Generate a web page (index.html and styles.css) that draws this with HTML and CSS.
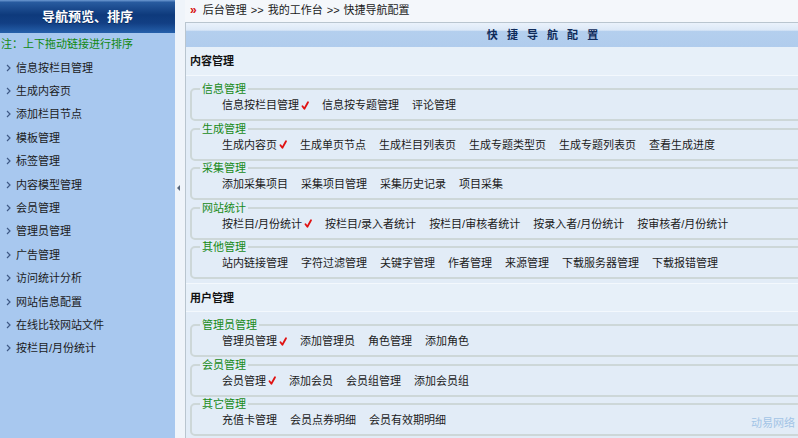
FILE: index.html
```html
<!DOCTYPE html>
<html lang="zh-CN">
<head>
<meta charset="utf-8">
<title>快捷导航配置</title>
<link rel="stylesheet" href="styles.css">
</head>
<body>
<div class="frame">
  <aside class="side">
    <div class="side-head">导航预览、排序</div>
    <div class="side-note">注：上下拖动链接进行排序</div>
    <ul class="side-menu">
      <li><svg class="chev" viewBox="0 0 5 8"><polyline points="1,1 4,4 1,7"/></svg>信息按栏目管理</li>
      <li><svg class="chev" viewBox="0 0 5 8"><polyline points="1,1 4,4 1,7"/></svg>生成内容页</li>
      <li><svg class="chev" viewBox="0 0 5 8"><polyline points="1,1 4,4 1,7"/></svg>添加栏目节点</li>
      <li><svg class="chev" viewBox="0 0 5 8"><polyline points="1,1 4,4 1,7"/></svg>模板管理</li>
      <li><svg class="chev" viewBox="0 0 5 8"><polyline points="1,1 4,4 1,7"/></svg>标签管理</li>
      <li><svg class="chev" viewBox="0 0 5 8"><polyline points="1,1 4,4 1,7"/></svg>内容模型管理</li>
      <li><svg class="chev" viewBox="0 0 5 8"><polyline points="1,1 4,4 1,7"/></svg>会员管理</li>
      <li><svg class="chev" viewBox="0 0 5 8"><polyline points="1,1 4,4 1,7"/></svg>管理员管理</li>
      <li><svg class="chev" viewBox="0 0 5 8"><polyline points="1,1 4,4 1,7"/></svg>广告管理</li>
      <li><svg class="chev" viewBox="0 0 5 8"><polyline points="1,1 4,4 1,7"/></svg>访问统计分析</li>
      <li><svg class="chev" viewBox="0 0 5 8"><polyline points="1,1 4,4 1,7"/></svg>网站信息配置</li>
      <li><svg class="chev" viewBox="0 0 5 8"><polyline points="1,1 4,4 1,7"/></svg>在线比较网站文件</li>
      <li><svg class="chev" viewBox="0 0 5 8"><polyline points="1,1 4,4 1,7"/></svg>按栏目/月份统计</li>
    </ul>
  </aside>

  <div class="splitter"><span class="split-arrow"></span></div>

  <main class="main">
    <div class="crumb"><span class="crumb-mark">»</span>后台管理 &gt;&gt; 我的工作台 &gt;&gt; 快捷导航配置</div>

    <div class="panel">
      <div class="panel-title">快 捷 导 航 配 置</div>

      <div class="sect-head">内容管理</div>
      <div class="sect-body">
        <fieldset class="grp">
          <legend>信息管理</legend>
          <div class="links">
            <span class="lk">信息按栏目管理<svg class="tick" viewBox="0 0 8 9"><path d="M1.5 5.2 L3.4 7.8 L7 1.2"/></svg></span>
            <span class="lk">信息按专题管理</span>
            <span class="lk">评论管理</span>
          </div>
        </fieldset>
        <fieldset class="grp">
          <legend>生成管理</legend>
          <div class="links">
            <span class="lk">生成内容页<svg class="tick" viewBox="0 0 8 9"><path d="M1.5 5.2 L3.4 7.8 L7 1.2"/></svg></span>
            <span class="lk">生成单页节点</span>
            <span class="lk">生成栏目列表页</span>
            <span class="lk">生成专题类型页</span>
            <span class="lk">生成专题列表页</span>
            <span class="lk">查看生成进度</span>
          </div>
        </fieldset>
        <fieldset class="grp">
          <legend>采集管理</legend>
          <div class="links">
            <span class="lk">添加采集项目</span>
            <span class="lk">采集项目管理</span>
            <span class="lk">采集历史记录</span>
            <span class="lk">项目采集</span>
          </div>
        </fieldset>
        <fieldset class="grp">
          <legend>网站统计</legend>
          <div class="links">
            <span class="lk">按栏目/月份统计<svg class="tick" viewBox="0 0 8 9"><path d="M1.5 5.2 L3.4 7.8 L7 1.2"/></svg></span>
            <span class="lk">按栏目/录入者统计</span>
            <span class="lk">按栏目/审核者统计</span>
            <span class="lk">按录入者/月份统计</span>
            <span class="lk">按审核者/月份统计</span>
          </div>
        </fieldset>
        <fieldset class="grp">
          <legend>其他管理</legend>
          <div class="links">
            <span class="lk">站内链接管理</span>
            <span class="lk">字符过滤管理</span>
            <span class="lk">关键字管理</span>
            <span class="lk">作者管理</span>
            <span class="lk">来源管理</span>
            <span class="lk">下载服务器管理</span>
            <span class="lk">下载报错管理</span>
          </div>
        </fieldset>
      </div>

      <div class="sect-head">用户管理</div>
      <div class="sect-body">
        <fieldset class="grp">
          <legend>管理员管理</legend>
          <div class="links">
            <span class="lk">管理员管理<svg class="tick" viewBox="0 0 8 9"><path d="M1.5 5.2 L3.4 7.8 L7 1.2"/></svg></span>
            <span class="lk">添加管理员</span>
            <span class="lk">角色管理</span>
            <span class="lk">添加角色</span>
          </div>
        </fieldset>
        <fieldset class="grp">
          <legend>会员管理</legend>
          <div class="links">
            <span class="lk">会员管理<svg class="tick" viewBox="0 0 8 9"><path d="M1.5 5.2 L3.4 7.8 L7 1.2"/></svg></span>
            <span class="lk">添加会员</span>
            <span class="lk">会员组管理</span>
            <span class="lk">添加会员组</span>
          </div>
        </fieldset>
        <fieldset class="grp">
          <legend>其它管理</legend>
          <div class="links">
            <span class="lk">充值卡管理</span>
            <span class="lk">会员点券明细</span>
            <span class="lk">会员有效期明细</span>
          </div>
        </fieldset>
      </div>
    </div>

    <div class="watermark">动易网络</div>
  </main>
</div>
</body>
</html>
```

FILE: styles.css
```css
html, body {
  margin: 0;
  padding: 0;
}

body {
  width: 798px;
  height: 438px;
  overflow: hidden;
  font-family: "Liberation Sans", "Noto Sans CJK SC", sans-serif;
  font-size: 11px;
  color: #1b1b1b;
  background: #f4f7fb;
}

.frame {
  display: flex;
  height: 438px;
}

/* ---- left navigation column ---- */
.side {
  width: 175px;
  flex: none;
  background: #a8c8ef;
}

.side-head {
  height: 33px;
  line-height: 33px;
  text-align: center;
  color: #fff;
  font-size: 13px;
  font-weight: bold;
  background: linear-gradient(to bottom, #6f9bd3 0, #285b9f 7%, #0e3a7c 45%, #123f84 70%, #2560ab 100%);
  text-shadow: 0 1px 0 #0a2a5a;
}

.side-note {
  height: 22px;
  line-height: 22px;
  padding-left: 1px;
  color: #12880f;
}

.side-menu {
  list-style: none;
  margin: 0;
  padding: 0;
}

.side-menu li {
  height: 23.4px;
  display: flex;
  align-items: center;
  gap: 5px;
  padding-left: 6px;
}

.chev {
  width: 5px;
  height: 8px;
  margin-top: 2px;
  fill: none;
  stroke: #3f5a86;
  stroke-width: 1.2;
}

/* ---- splitter between columns ---- */
.splitter {
  width: 10px;
  flex: none;
  background: #eff4fa;
  display: flex;
  flex-direction: column;
  padding-top: 185px;
  box-sizing: border-box;
}

.split-arrow {
  width: 0;
  height: 0;
  margin-left: 2px;
  border-top: 3px solid transparent;
  border-bottom: 3px solid transparent;
  border-right: 3px solid #56657a;
}

/* ---- right work area ---- */
.main {
  flex: 1;
  min-width: 0;
  overflow: hidden;
  position: relative;
}

.crumb {
  height: 22px;
  line-height: 20px;
  padding-left: 5px;
  color: #1b1b1b;
  white-space: nowrap;
  word-spacing: 1px;
}

.crumb-mark {
  color: #d81010;
  font-weight: bold;
  font-size: 12px;
  margin-right: 6px;
}

.panel {
  width: 712px;
  border: 1px solid #b9c5cf;
  background: #e2ecf7;
  box-sizing: border-box;
}

.panel-title {
  height: 24px;
  line-height: 24px;
  text-align: center;
  font-weight: bold;
  color: #0f2b5a;
  letter-spacing: 3px;
  padding-left: 6px;
  background: linear-gradient(to bottom, #eaf2fb 0, #dce8f7 30%, #b4cfee 34%, #b0cced 100%);
}

.sect-head {
  height: 29px;
  line-height: 29px;
  padding-left: 4px;
  font-weight: bold;
  color: #111;
  background: #e7f0f9;
  border-bottom: 1px solid #f3f8fd;
  box-sizing: border-box;
}

.sect-body {
  padding: 6px 4px 3.5px 4px;
}

.sect-body + .sect-head {
  border-top: 1px solid #f3f8fd;
}

.grp {
  margin: 0 0 0.5px 0;
  padding: 0 8px 5px 8px;
  border: 2px solid #cdd7d8;
  border-radius: 5px;
  min-width: 0;
}

.grp legend {
  padding: 0 2px;
  line-height: 14px;
  color: #178a17;
}

.links {
  height: 18px;
  line-height: 18px;
  margin-left: 22px;
  white-space: nowrap;
  display: flex;
  gap: 13px;
}

.lk {
  display: inline-flex;
  align-items: center;
}

.tick {
  width: 8px;
  height: 9px;
  margin-left: 2px;
  fill: none;
  stroke: #e01212;
  stroke-width: 1.8;
  stroke-linecap: round;
  stroke-linejoin: round;
}

.watermark {
  position: absolute;
  right: 3px;
  bottom: 8px;
  color: #a3c4e6;
  font-size: 11px;
}
```
